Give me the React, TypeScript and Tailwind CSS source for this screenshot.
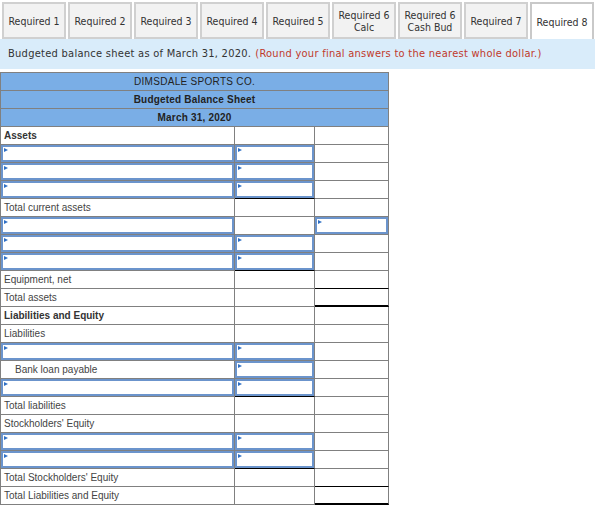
import React from "react";

const TABS: { lines: string[]; active?: boolean }[] = [
  { lines: ["Required 1"] },
  { lines: ["Required 2"] },
  { lines: ["Required 3"] },
  { lines: ["Required 4"] },
  { lines: ["Required 5"] },
  { lines: ["Required 6", "Calc"] },
  { lines: ["Required 6", "Cash Bud"] },
  { lines: ["Required 7"] },
  { lines: ["Required 8"], active: true },
];

type Cell = "" | "in";
type Row = {
  label?: string;
  bold?: boolean;
  indent?: boolean;
  c1?: Cell;
  c2?: Cell;
  c3?: Cell;
  b2?: boolean;
  b3?: "thin" | "thick";
};

const ROWS: Row[] = [
  { label: "Assets", bold: true },
  { c1: "in", c2: "in" },
  { c1: "in", c2: "in" },
  { c1: "in", c2: "in", b2: true },
  { label: "Total current assets" },
  { c1: "in", c3: "in" },
  { c1: "in", c2: "in" },
  { c1: "in", c2: "in", b2: true },
  { label: "Equipment, net", b3: "thin" },
  { label: "Total assets", b3: "thick" },
  { label: "Liabilities and Equity", bold: true },
  { label: "Liabilities" },
  { c1: "in", c2: "in" },
  { label: "Bank loan payable", indent: true, c2: "in" },
  { c1: "in", c2: "in", b2: true },
  { label: "Total liabilities" },
  { label: "Stockholders' Equity" },
  { c1: "in", c2: "in" },
  { c1: "in", c2: "in", b2: true },
  { label: "Total Stockholders' Equity", b3: "thin" },
  { label: "Total Liabilities and Equity", b3: "thick" },
];

function InputBox() {
  return (
    <div className="relative h-full w-full border-2 border-[#6b94cc] bg-white">
      <span className="absolute left-[1px] top-[1px] h-0 w-0 border-y-[2.5px] border-l-[4px] border-y-transparent border-l-[#2f6fc4]" />
    </div>
  );
}

export default function App() {
  return (
    <div className="w-[595px] h-[508px] bg-white text-[#333] font-['DejaVu_Sans_Condensed','Liberation_Sans',sans-serif]">
      {/* Tabs */}
      <div className="flex gap-[2px] pl-[2px] pt-[2px]">
        {TABS.map((t, i) => (
          <div
            key={i}
            className={
              t.active
                ? "flex h-[37px] w-[64px] flex-col items-center justify-center border-2 border-b-0 border-[#c9c9c9] bg-white text-[10.5px] leading-[12px]"
                : "flex h-[37px] w-[64px] flex-col items-center justify-center border-2 border-[#d0d0d0] bg-[#f2f2f2] text-[10.5px] leading-[12px]"
            }
          >
            {t.lines.map((l, j) => (
              <span key={j} className="whitespace-nowrap">
                {l}
              </span>
            ))}
          </div>
        ))}
      </div>

      {/* Instruction band */}
      <div className="flex h-[30px] items-center bg-[#d9ecfa] pl-[8px] text-[11px] tracking-[0.27px] whitespace-nowrap">
        <span>Budgeted balance sheet as of March 31, 2020.</span>
        <span className="ml-[4px] text-[#c0392b]">(Round your final answers to the nearest whole dollar.)</span>
      </div>

      {/* Table */}
      <div className="mt-[3px] w-[389px] border-l border-t border-[#808080] font-['Liberation_Sans',Arial,sans-serif] text-[10px] text-[#333]">
        {["DIMSDALE SPORTS CO.", "Budgeted Balance Sheet", "March 31, 2020"].map((h, i) => (
          <div
            key={h}
            className={
              "flex h-[18px] items-center justify-center border-b border-r border-[#808080] bg-[#7aaee6] text-[#222] " +
              (i === 0 ? "tracking-[0.3px]" : "font-bold tracking-[0.2px]")
            }
          >
            {h}
          </div>
        ))}
        {ROWS.map((r, i) => (
          <div key={i} className="flex h-[18px]">
            <div className="flex h-[18px] w-[234px] items-center border-b border-r border-[#808080]">
              {r.c1 === "in" ? (
                <InputBox />
              ) : (
                <span
                  className={
                    (r.indent ? "pl-[14px] " : "pl-[3px] ") +
                    (r.bold ? "font-bold text-[#333]" : "text-[#444]")
                  }
                >
                  {r.label}
                </span>
              )}
            </div>
            <div
              className={
                "flex h-[18px] w-[80px] items-center border-r border-[#808080] " +
                (r.b2 ? "border-b border-b-black" : "border-b")
              }
            >
              {r.c2 === "in" && <InputBox />}
            </div>
            <div
              className={
                "flex h-[18px] w-[74px] items-center border-r border-[#808080] " +
                (r.b3 === "thick"
                  ? "border-b-2 border-b-black"
                  : r.b3 === "thin"
                  ? "border-b border-b-black"
                  : "border-b")
              }
            >
              {r.c3 === "in" && <InputBox />}
            </div>
          </div>
        ))}
      </div>
    </div>
  );
}
